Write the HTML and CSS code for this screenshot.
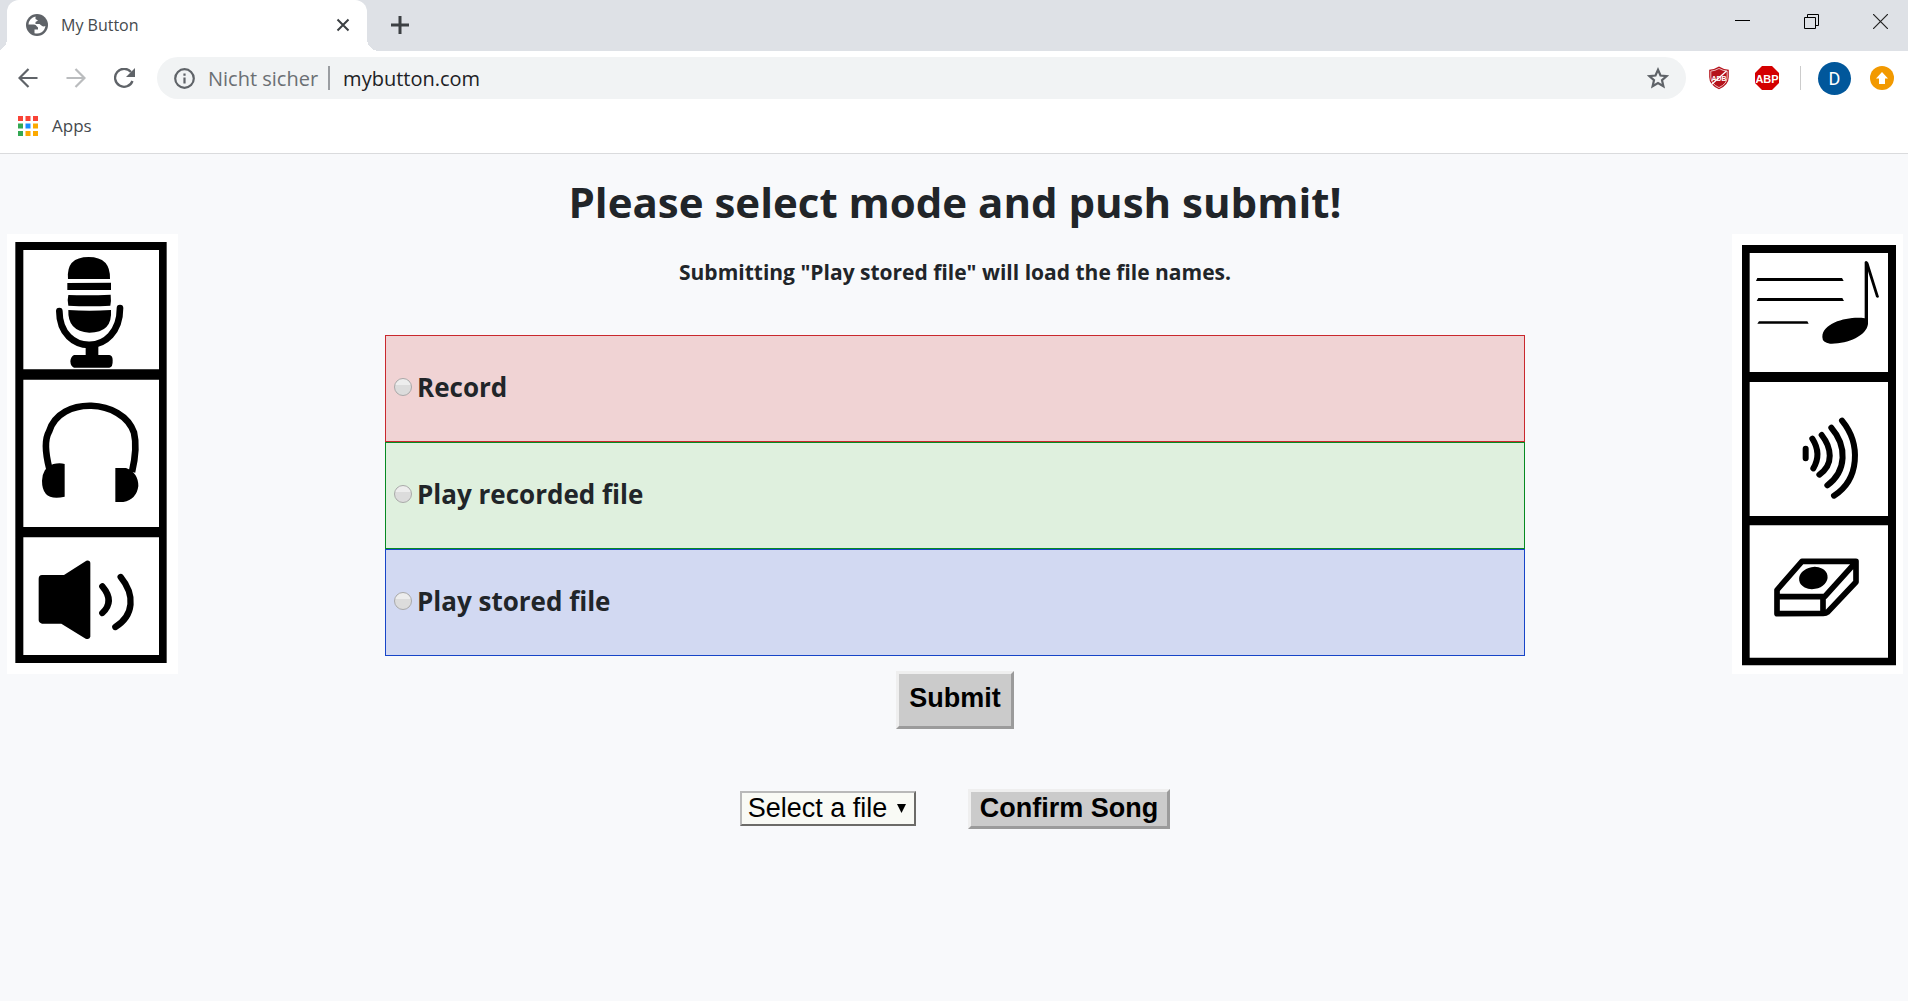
FILE: index.html
```html
<!DOCTYPE html>
<html lang="en">
<head>
<meta charset="utf-8">
<title>My Button</title>
<link rel="stylesheet" href="styles.css">
</head>
<body>
<header class="browser">
  <div class="tabstrip">
    <span class="flare flare-left"></span>
    <div class="tab">
      <svg class="favicon" viewBox="0 0 22 22" width="22" height="22"><circle cx="11" cy="11" r="11" fill="#5f6368"/><path d="M9.500 2.600A8.500 8.500 0 0 0 2.500 10.500H8q2 0 2.500 1.500l1.500 1.500v2H8.500V19.200A8.500 8.500 0 0 0 19.400 12q-2 1-4-.5L13.500 10H9.500V8L12 6.500 9.500 5z" fill="#fff"/></svg>
      <span class="tab-title">My Button</span>
      <button class="icon-button" aria-label="Close tab"><svg width="14" height="14" viewBox="0 0 14 14" fill="none" stroke="#3c4043" stroke-width="2"><path d="M1.500 1.500l11 11M12.500 1.500l-11 11"/></svg></button>
    </div>
    <span class="flare flare-right"></span>
    <button class="icon-button new-tab" aria-label="New tab"><svg width="18" height="18" viewBox="0 0 18 18" fill="none" stroke="#3c4043" stroke-width="3"><path d="M9 0v18M0 9h18"/></svg></button>
    <div class="window-controls">
      <button class="icon-button" aria-label="Minimize"><svg width="15" height="15" viewBox="0 0 15 15" fill="#000"><path d="M0 6h15v1H0z"/></svg></button>
      <button class="icon-button" aria-label="Restore"><svg width="15" height="15" viewBox="0 0 15 15" fill="none" stroke="#000"><path d="M.5 3.500h11v11H.5zM3.500 3V.5h11v11H12"/></svg></button>
      <button class="icon-button" aria-label="Close"><svg width="15" height="15" viewBox="0 0 15 15" fill="none" stroke="#222" stroke-width="1.200"><path d="M0 0l15 15M15 0L0 15"/></svg></button>
    </div>
  </div>
  <div class="toolbar">
    <div class="nav">
      <button class="icon-button" aria-label="Back"><svg width="20" height="20" viewBox="0 0 20 20" fill="none" stroke="#5f6368" stroke-width="2.200"><path d="M19.500 10H2M10.500 1L1.500 10l9 9"/></svg></button>
      <button class="icon-button" aria-label="Forward"><svg width="20" height="20" viewBox="0 0 20 20" fill="none" stroke="#babcbe" stroke-width="2.200"><path d="M.5 10H18M9.500 1l9 9-9 9"/></svg></button>
      <button class="icon-button" aria-label="Reload"><svg width="22" height="20" viewBox="0 0 22 20"><path d="M18.500 13A9 9 0 1 1 17 4" fill="none" stroke="#5f6368" stroke-width="2.300"/><path d="M21 0v9h-9z" fill="#5f6368"/></svg></button>
    </div>
    <div class="omnibox">
      <svg width="21" height="21" viewBox="0 0 21 21"><circle cx="10.500" cy="10.500" r="9.300" fill="none" stroke="#5f6368" stroke-width="2.200"/><path d="M9.400 9.500h2.200v6H9.400zM9.400 5.500h2.200v2.200H9.400z" fill="#5f6368"/></svg>
      <span class="security">Nicht sicher</span>
      <span class="omni-divider"></span>
      <input class="address" type="text" value="mybutton.com" aria-label="Address">
      <button class="icon-button" aria-label="Bookmark this page"><svg width="22" height="22" viewBox="0 0 22 22" fill="none" stroke="#5f6368" stroke-width="2.200"><path d="M11 2.800l2.500 5.700 6.200.6-4.700 4.100 1.400 6.100L11 16.100l-5.400 3.200L7 13.200 2.300 9.100l6.200-.6z"/></svg></button>
    </div>
    <div class="extensions">
      <button class="icon-button" aria-label="Adblock"><svg width="22" height="24" viewBox="0 0 22 24"><path d="M11 .6q4.500 3 9.800 3.200V11q0 8-9.800 12.300Q1.200 19 1.200 11V3.800Q6.500 3.600 11 .6z" fill="#b5121b"/><path d="M11 2.500q4 2.300 8.200 2.600V11q0 6.800-8.200 10.600Q2.800 17.800 2.800 11V5.100Q7 4.800 11 2.500z" fill="none" stroke="#f3cfd0" stroke-width=".9"/><text x="11" y="14.500" text-anchor="middle" class="adb-text">ADB</text><path d="M3.500 18.500L18.500 5" stroke="#fff" stroke-width="1.300"/></svg></button>
      <button class="icon-button" aria-label="ABP"><svg width="24" height="24" viewBox="0 0 24 24"><path d="M7 0h10l7 7v10l-7 7H7l-7-7V7z" fill="#d40000"/><text x="12" y="16.500" text-anchor="middle" class="abp-text">ABP</text></svg></button>
      <span class="ext-divider"></span>
      <button class="avatar">D</button>
      <button class="icon-button" aria-label="Update"><svg width="24" height="24" viewBox="0 0 24 24"><circle cx="12" cy="12" r="12" fill="#f29900"/><path d="M12 6l6 6.500h-3V18H9v-5.500H6z" fill="#fff"/></svg></button>
    </div>
  </div>
  <nav class="bookmarks">
    <a class="apps" href="#"><svg width="20" height="20" viewBox="0 0 20 20"><path d="M0 0h5v5H0zM7.500 0h5v5h-5zM15 0h5v5h-5z" fill="#f94336"/><path d="M0 7.500h5v5H0zM0 15h5v5H0z" fill="#34a853"/><path d="M7.500 7.500h5v5h-5z" fill="#1a8cff"/><path d="M15 7.500h5v5h-5zM7.500 15h5v5h-5zM15 15h5v5h-5z" fill="#fba900"/></svg>Apps</a>
  </nav>
</header>
<main class="page">
  <h1>Please select mode and push submit!</h1>
  <div class="columns">
    <svg class="pictogram" viewBox="21 24 513 1320" role="img" aria-label="Microphone, headphones, speaker">
      <path fill="#fff" d="M21 24h513v1320H21z"/>
      <path fill-rule="evenodd" d="M46 48H500V1311H46zM70 72V430H477V72zM70 461V903H477V461zM70 934V1287H477V934z"/>
      <path d="M204 159Q198 93 266 93Q332 93 330 159zM202 171L333 170V192H202zM205 207Q270 209 332 206Q334 225 331 239Q270 243 205 239Q201 222 205 207zM205 252Q268 256 333 252Q338 320 268 320Q202 316 205 252z"/>
      <path d="M178 255C178 392 360 392 360 246" fill="none" stroke="#000" stroke-width="20" stroke-linecap="round"/>
      <path d="M257 350H295V387H328Q338 388 338 402Q339 424 328 425H222Q212 422 211 406Q212 392 222 387H257z"/>
      <path d="M148 728Q128 650 147 617C180 508 368 518 402 620Q413 665 396 738" fill="none" stroke="#000" stroke-width="20"/>
      <path d="M194 714V812Q126 828 126 764Q128 724 160 714Q180 710 194 714zM346 726H378Q415 740 415 780Q410 820 370 828H346z"/>
      <path d="M126 1047H192L259 1004Q271 1002 271 1012V1232Q268 1242 257 1238L184 1193H126Q116 1190 116 1182V1058Q116 1048 126 1047z"/>
      <path d="M307 1081Q345 1126 307 1161M362 1053C406 1107 402 1168 346 1203" fill="none" stroke="#000" stroke-width="19" stroke-linecap="round"/>
    </svg>
    <div class="content">
      <p class="hint">Submitting "Play stored file" will load the file names.</p>
      <form class="modes">
        <div class="options">
          <label class="option record"><input type="radio" name="mode">Record</label>
          <label class="option recorded"><input type="radio" name="mode">Play recorded file</label>
          <label class="option stored"><input type="radio" name="mode">Play stored file</label>
        </div>
        <button class="action submit" type="button">Submit</button>
      </form>
      <form class="song">
        <div class="picker">
          <select aria-label="Song file"><option>Select a file</option></select>
          <svg class="arrow" width="9" height="9" viewBox="0 0 9 9"><path d="M0 0h9L4.500 9z"/></svg>
        </div>
        <button class="action" type="button">Confirm Song</button>
      </form>
    </div>
    <svg class="pictogram" viewBox="36 24 513 1320" role="img" aria-label="Music, sound waves, button">
      <path fill="#fff" d="M36 24h513v1320H36z"/>
      <path fill-rule="evenodd" d="M66 57H528V1318H66zM89 81V438H504V81zM89 468V870H504V468zM89 898V1295H504V898z"/>
      <path d="M112 156H366L371 165H108zM115 216H367L372 225H110zM117 286H262L266 293H112z"/>
      <path d="M307 333C308 288 390 270 434 277V108Q439 101 445 110L477 213Q472 218 468 212L444 136V294C440 330 380 355 330 353Q307 350 307 333z"/>
      <path d="M257 668V697M277 638Q306 684 280 727M305 627C335 665 342 716 298 746M334 605C382 660 380 735 322 778M366 584C424 655 418 760 342 809" fill="none" stroke="#000" stroke-width="18" stroke-linecap="round"/>
      <path d="M171 1163V1092L246 1006H408V1068L323 1158Q318 1162 310 1162zM171 1112H314L404 1012M309 1112V1160" fill="none" stroke="#000" stroke-width="17" stroke-linejoin="round"/>
      <ellipse cx="280" cy="1056" rx="43" ry="33" transform="rotate(-10 280 1056)"/>
    </svg>
  </div>
</main>
</body>
</html>
```
FILE: styles.css
```css
* { box-sizing: border-box; }

body {
  margin: 0;
  min-height: 100vh;
  background: #f8f9fb;
  color: #212529;
  font-family: "Open Sans", "Noto Sans", sans-serif;
}

button, input, select { margin: 0; font: inherit; color: inherit; }
svg { display: block; flex: none; }

.icon-button { padding: 0; border: 0; background: none; }

/* browser frame */
.browser { background: #fff; border-bottom: 1px solid #dadbdd; }

.tabstrip { display: flex; height: 51px; background: #dee1e6; }
.tab {
  display: flex;
  align-items: center;
  width: 360px;
  padding: 0 17px 2px 19px;
  border-radius: 12px 12px 0 0;
  background: #fff;
}
.tab-title { flex: 1; margin-left: 13px; color: #45494d; font-size: 16px; }
.flare { align-self: flex-end; height: 12px; }
.flare-left { width: 7px; background: radial-gradient(circle at -5px 0, #dee1e6 12px, #fff 12px); }
.flare-right { width: 12px; background: radial-gradient(circle at 100% 0, #dee1e6 12px, #fff 12px); }
.new-tab { margin-left: 12px; padding-bottom: 2px; }
.window-controls {
  display: flex;
  gap: 54px;
  margin-left: auto;
  padding: 14px 20px 0 0;
  align-items: flex-start;
}

.toolbar { display: flex; align-items: center; padding: 6px 14px 0 18px; }
.nav { display: flex; align-items: center; gap: 28px; margin-right: 21px; }
.omnibox {
  display: flex;
  flex: 1;
  align-items: center;
  height: 42px;
  padding: 0 17px;
  border-radius: 21px;
  background: #f1f3f4;
  font-size: 20px;
}
.security { margin-left: 13px; color: #6b6f73; }
.omni-divider { width: 2px; height: 24px; margin: 0 13px 0 10px; background: #9a9da1; }
.address { flex: 1; padding: 0; border: 0; outline: 0; background: none; color: #202124; }
.extensions { display: flex; align-items: center; margin-left: 22px; }
.ext-divider { width: 1px; height: 24px; margin: 0 17px 0 21px; background: #ccc; }
.extensions .icon-button + .icon-button { margin-left: 25px; }
.avatar {
  width: 33px;
  height: 33px;
  margin-right: 19px;
  padding: 0;
  border: 0;
  border-radius: 50%;
  background: #01579b;
  color: #fff;
  font-family: Roboto, sans-serif;
  font-size: 18px;
}
.adb-text { fill: #fff; font: bold 7px "Liberation Sans", sans-serif; }
.abp-text { fill: #fff; font: bold 11px "Liberation Sans", sans-serif; }

.bookmarks { height: 54px; padding: 13px 18px; }
.apps {
  display: inline-flex;
  align-items: center;
  gap: 14px;
  color: #45494d;
  font-size: 17px;
  line-height: 28px;
  text-decoration: none;
}

/* page */
.page { padding: 18px 5px 0 7px; }
h1 { margin: 0 0 2px; font-size: 42px; font-weight: 700; line-height: 60px; text-align: center; }
.columns { display: flex; justify-content: space-between; align-items: flex-start; }
.pictogram { width: 171px; height: 440px; }
.content { width: 61%; max-width: 1140px; text-align: center; }
.hint { margin: 22px 0 47px; font-size: 21px; font-weight: 700; line-height: 32px; }

.option {
  display: flex;
  align-items: center;
  gap: 5px;
  height: 107px;
  padding: 0 8px 4px;
  border: 1px solid;
  font-size: 26px;
  font-weight: 700;
}
.record { border-color: #c9282d; background: #f0d3d4; }
.recorded { border-color: #068a22; background: #dff0de; }
.stored { border-color: #1745c8; background: #d2d9f2; }
.option input {
  appearance: none;
  width: 18px;
  height: 18px;
  border: 1px solid #a9a9a9;
  border-radius: 50%;
  background: linear-gradient(#ededed 35%, #dcdcdc 40%);
}

.action {
  height: 40px;
  padding: 0 9px 2px;
  border: 3px solid;
  border-color: #efefef #9b9b9b #9b9b9b #efefef;
  background: #cbcbcb;
  color: #000;
  font: bold 27px/30px "Liberation Sans", Arial, sans-serif;
}
.submit { height: 58px; margin-top: 15px; padding: 0 10px 4px; }

.song { display: flex; justify-content: center; align-items: center; gap: 52px; margin-top: 60px; }
.picker { position: relative; padding-bottom: 1px; }
.picker select {
  appearance: none;
  display: block;
  width: 176px;
  height: 35px;
  padding: 0 6px 2px;
  border: 2px solid;
  border-color: #b9b9b9 #6c6b68 #6c6b68 #b9b9b9;
  background: #f9faf5;
  color: #000;
  font: 27px/30px "Liberation Sans", Arial, sans-serif;
}
.arrow { position: absolute; top: 13px; right: 10px; pointer-events: none; }
```
